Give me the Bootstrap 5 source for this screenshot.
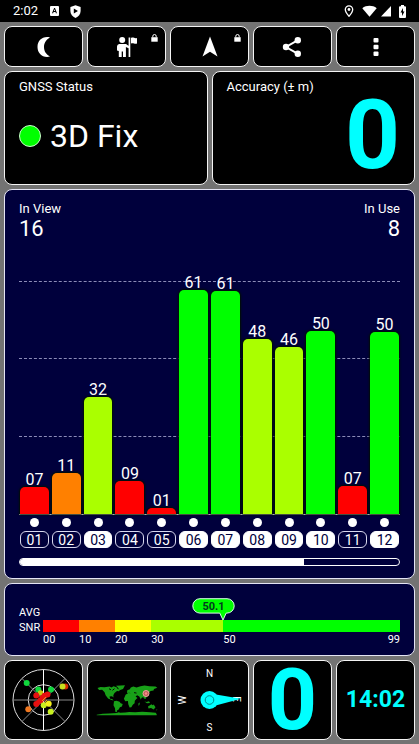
<!DOCTYPE html>
<html lang="en">
<head>
<meta charset="utf-8">
<meta name="viewport" content="width=device-width, initial-scale=1">
<title>GNSS Status</title>
<link href="https://cdn.jsdelivr.net/npm/bootstrap@5.3.0/dist/css/bootstrap.min.css" rel="stylesheet">
<style>
body{background:#737373;color:#fff;font-family:Roboto,"Liberation Sans",sans-serif;font-size:13px;line-height:16px}
svg{display:block}
.statusbar{height:22px;padding:0 13px;font-size:13px}
.icons{gap:11px;margin-left:12px}
.deck{padding:4px;gap:4px}
.rowline{gap:4px}
.rowline>*{flex:1 1 0;min-width:0}
.tile{background:#000;border:1px solid #f4f4f4;border-radius:8px;color:#fff;padding:0}
.tool{height:41px}
.lock{position:absolute;top:7px;right:7px}
.info{height:114px;padding:7px 14px}
.lamp{width:22px;height:22px;border-radius:50%;background:#0f0;border:1px solid #c8ffc8}
.fixrow{margin-top:21px}
.fix{font-size:32px;line-height:40px;margin-left:9px}
.cyan{color:#0ff;font-weight:700}
.acc{font-size:96px;line-height:80px}
.navy{background:#00003c;border:1px solid #e4e4f4;border-radius:8px;padding:11px 14px 12px}
.big{font-size:22px;line-height:24px}
.plot{height:274px;border-bottom:1px solid #fff;position:relative;padding:0 1px}
.guides{position:absolute;inset:0}
.guides i{display:block;height:78px;border-top:1px dashed #8c8cb8}
.guides i:first-child{height:77px}
.bars{gap:3px;position:relative}
.bars>*{flex:1 1 0;min-width:0}
.val{font-size:16px;line-height:14px}
.bar{width:100%;flex-shrink:0;border-radius:5px 5px 0 0;box-shadow:0 0 2px 1px #001000}
.c-red{background:#f00}.c-org{background:#ff8000}.c-yel{background:#ff0}.c-lime{background:#af0}.c-grn{background:#0f0}
.ids{padding:3px 1px 0}
.pip{width:9px;height:9px;border-radius:50%;background:#fff;margin-bottom:4px}
.chip{width:100%;height:17px;border:1px solid #d8d8ee;border-radius:6px;font-size:14px;line-height:16px;text-align:center}
.used{background:#fff;color:#00003c;border-color:#fff}
.track{height:8px;margin-top:10px;border:1px solid #fff;border-radius:4px;background:transparent}
.track .progress-bar{background:#fff}
.avgbox{height:73px;padding:21px 14px 0}
.avgname{font-size:11px;line-height:15px;width:24px}
.scale{height:12px;margin-top:15px}
.f10{flex:10 1 0;min-width:0}.f20{flex:20 1 0;min-width:0}.f49{flex:49 1 0;min-width:0}
.ticks{font-size:11px;line-height:15px}
.bubble{position:absolute;top:-7px;left:calc(50.5% - 31px)}
.gauge{height:80px}
.gauge svg{width:100%;height:100%}
.speed{font-size:86px;line-height:78px}
.clock{font-size:23px;line-height:26px}
</style>
<script src="https://cdn.jsdelivr.net/npm/bootstrap@5.3.0/dist/js/bootstrap.bundle.min.js"></script>
</head>
<body>
<header class="statusbar bg-black d-flex align-items-center justify-content-between">
  <div class="d-flex align-items-center">
    <span>2:02</span>
    <div class="icons d-flex align-items-center">
    <svg width="9" height="10" viewBox="0 0 9 10"><rect width="9" height="10" rx="1" fill="#fff"/><path d="M2 7.200 4.100 2h.9L7 7.200H5.900L5.500 6H3.600L3.100 7.200zM3.900 5h1.300L4.550 3.300zM1.500 8.500h6" fill="#000"/></svg>
    <svg width="11" height="13" viewBox="2.500 .3 11 13.200"><path d="M8 .5 13.200 2.300v4.200c0 3.300-2.200 5.700-5.200 6.900-3-1.200-5.200-3.600-5.200-6.900V2.300z" fill="#fff"/><path d="M6.300 3.900v5l4.200-2.500z" fill="#000"/></svg>
    </div>
  </div>
  <div class="d-flex align-items-center">
    <svg width="10" height="12" viewBox="0 0 10 12"><path d="M5 .8a3.700 3.700 0 0 0-3.700 3.700C1.300 7.100 5 11.200 5 11.200s3.700-4.100 3.700-6.700A3.700 3.700 0 0 0 5 .8z" fill="none" stroke="#fff" stroke-width="1.300"/><circle cx="5" cy="4.500" r="1.400" fill="#fff"/></svg>
    <svg class="ms-2" width="15" height="12" viewBox="0 0 15 12"><path d="M.3 3.200C4.300 0 10.700 0 14.700 3.200L7.500 11.800z" fill="#fff"/></svg>
    <svg class="ms-1" width="10" height="12" viewBox="0 0 10 12"><path d="M0 11.500 10 1v10.500z" fill="#fff"/></svg>
    <svg class="ms-2" width="7" height="13" viewBox="0 0 7 13"><path d="M0 2.200q0-1 1-1h1V0h3v1.200h1q1 0 1 1V12q0 1-1 1H1q-1 0-1-1z" fill="#fff"/><path d="M4 3 1.500 7.500H3V11l2.500-4.500H4z" fill="#000"/></svg>
  </div>
</header>

<main class="deck d-flex flex-column">
  <nav class="rowline d-flex" aria-label="Tools">
    <button class="tile tool btn d-flex align-items-center justify-content-center" aria-label="Night mode"><svg width="22" height="22" viewBox="0 0 22 22"><path d="M17 1.400C9.500-.2 4.500 4.500 4.500 11S9.500 22.200 17 20.600C12.500 18 11 14.500 11 11s1.500-7 6-9.600z" fill="#fff"/></svg></button>
    <button class="tile tool btn position-relative d-flex align-items-center justify-content-center" aria-label="Guide"><svg width="22" height="22" viewBox="0 0 22 22"><g fill="#fff"><circle cx="6.200" cy="4" r="3"/><path d="M3 8h7l3.500 2.500-1 1.700L9.900 11v10H7v-5.500H5.700V21H2.800v-6L1 14.500v-4Q1 8.500 3 8zM12.600 1.500h1.700V21h-1.700zM15 2c2.300-1.300 3.500 1 6 0v5.500c-2.500 1-3.700-1.200-6 0z"/></g></svg>
      <svg class="lock" width="7" height="8" viewBox="0 0 7 8"><path d="M.3 3.200h6.400v4.500H.3z" fill="#fff"/><path d="M1.800 3.300V2.200a1.700 1.700 0 0 1 3.400 0v1.100" fill="none" stroke="#fff"/></svg></button>
    <button class="tile tool btn position-relative d-flex align-items-center justify-content-center" aria-label="Navigate"><svg width="22" height="22" viewBox="0 0 22 22"><path d="m11 .5 7.500 20-7.500-4.700-7.500 4.700z" fill="#fff"/></svg>
      <svg class="lock" width="7" height="8" viewBox="0 0 7 8"><path d="M.3 3.200h6.400v4.500H.3z" fill="#fff"/><path d="M1.800 3.300V2.200a1.700 1.700 0 0 1 3.400 0v1.100" fill="none" stroke="#fff"/></svg></button>
    <button class="tile tool btn d-flex align-items-center justify-content-center" aria-label="Share"><svg width="22" height="22" viewBox="0 0 22 22"><path d="M15.500 4.300 4 11l11.500 6.700" fill="none" stroke="#fff" stroke-width="2"/><g fill="#fff"><circle cx="15.800" cy="4.300" r="3.200"/><circle cx="4" cy="11" r="3.200"/><circle cx="15.800" cy="17.700" r="3.200"/></g></svg></button>
    <button class="tile tool btn d-flex align-items-center justify-content-center" aria-label="Menu"><svg width="6" height="20" viewBox="0 0 6 20"><g fill="#fff"><rect x=".5" y="1" width="5" height="4.500" rx="1"/><rect x=".5" y="7.800" width="5" height="4.500" rx="1"/><rect x=".5" y="14.600" width="5" height="4.500" rx="1"/></g></svg></button>
  </nav>

  <section class="rowline d-flex">
    <div class="tile info">
      <div>GNSS Status</div>
      <div class="fixrow d-flex align-items-center"><span class="lamp"></span><span class="fix">3D Fix</span></div>
    </div>
    <div class="tile info">
      <div>Accuracy (± m)</div>
      <div class="acc cyan text-end">0</div>
    </div>
  </section>

  <section class="navy">
    <div class="d-flex justify-content-between">
      <div>In View<div class="big">16</div></div>
      <div class="text-end">In Use<div class="big">8</div></div>
    </div>
    <div class="plot">
      <div class="guides d-flex flex-column justify-content-end"><i></i><i></i><i></i></div>
      <div class="bars d-flex h-100">
        <div class="d-flex flex-column justify-content-end align-items-center"><span class="val">07</span><div class="bar c-red" style="height:9.9%"></div></div>
        <div class="d-flex flex-column justify-content-end align-items-center"><span class="val">11</span><div class="bar c-org" style="height:15%"></div></div>
        <div class="d-flex flex-column justify-content-end align-items-center"><span class="val">32</span><div class="bar c-lime" style="height:42.9%"></div></div>
        <div class="d-flex flex-column justify-content-end align-items-center"><span class="val">09</span><div class="bar c-red" style="height:12.1%"></div></div>
        <div class="d-flex flex-column justify-content-end align-items-center"><span class="val">01</span><div class="bar c-red" style="height:2.2%"></div></div>
        <div class="d-flex flex-column justify-content-end align-items-center"><span class="val">61</span><div class="bar c-grn" style="height:82%"></div></div>
        <div class="d-flex flex-column justify-content-end align-items-center"><span class="val">61</span><div class="bar c-grn" style="height:81.7%"></div></div>
        <div class="d-flex flex-column justify-content-end align-items-center"><span class="val">48</span><div class="bar c-lime" style="height:64.200%"></div></div>
        <div class="d-flex flex-column justify-content-end align-items-center"><span class="val">46</span><div class="bar c-lime" style="height:61.200%"></div></div>
        <div class="d-flex flex-column justify-content-end align-items-center"><span class="val">50</span><div class="bar c-grn" style="height:67%"></div></div>
        <div class="d-flex flex-column justify-content-end align-items-center"><span class="val">07</span><div class="bar c-red" style="height:10.300%"></div></div>
        <div class="d-flex flex-column justify-content-end align-items-center"><span class="val">50</span><div class="bar c-grn" style="height:66.700%"></div></div>
      </div>
    </div>
    <div class="bars ids d-flex">
      <div class="d-flex flex-column align-items-center"><span class="pip"></span><span class="chip">01</span></div>
      <div class="d-flex flex-column align-items-center"><span class="pip"></span><span class="chip">02</span></div>
      <div class="d-flex flex-column align-items-center"><span class="pip"></span><span class="chip used">03</span></div>
      <div class="d-flex flex-column align-items-center"><span class="pip"></span><span class="chip">04</span></div>
      <div class="d-flex flex-column align-items-center"><span class="pip"></span><span class="chip">05</span></div>
      <div class="d-flex flex-column align-items-center"><span class="pip"></span><span class="chip used">06</span></div>
      <div class="d-flex flex-column align-items-center"><span class="pip"></span><span class="chip used">07</span></div>
      <div class="d-flex flex-column align-items-center"><span class="pip"></span><span class="chip used">08</span></div>
      <div class="d-flex flex-column align-items-center"><span class="pip"></span><span class="chip used">09</span></div>
      <div class="d-flex flex-column align-items-center"><span class="pip"></span><span class="chip used">10</span></div>
      <div class="d-flex flex-column align-items-center"><span class="pip"></span><span class="chip">11</span></div>
      <div class="d-flex flex-column align-items-center"><span class="pip"></span><span class="chip used">12</span></div>
    </div>
    <div class="progress track"><div class="progress-bar" style="width:75%"></div></div>
  </section>

  <section class="navy avgbox d-flex">
    <div class="avgname">AVG<br>SNR</div>
    <div class="flex-grow-1 position-relative">
      <div class="scale d-flex"><div class="f10 c-red"></div><div class="f10 c-org"></div><div class="f10 c-yel"></div><div class="f20 c-lime"></div><div class="f49 c-grn"></div></div>
      <div class="ticks d-flex"><span class="f10">00</span><span class="f10">10</span><span class="f10">20</span><span class="f20">30</span><span class="f49 d-flex justify-content-between"><span>50</span><span>99</span></span></div>
      <svg class="bubble" width="44" height="23" viewBox="0 0 44 23" role="img" aria-label="Average 50.1"><path d="M8 .7h27a7.200 7.200 0 0 1 0 14.400h-.8L31 22l-3.200-6.900H8A7.200 7.200 0 0 1 8 .7z" fill="#0f0" stroke="#d8ffe4"/><text x="21.500" y="12" text-anchor="middle" font-size="11" font-weight="700" fill="#003c1e">50.1</text></svg>
    </div>
  </section>

  <section class="rowline d-flex">
    <div class="tile gauge"><svg viewBox="1 1 77 78" role="img" aria-label="Sky view">
      <g fill="none" stroke="#ddd" stroke-width="1"><circle cx="39.500" cy="40" r="30.500"/><circle cx="39.500" cy="40" r="15.300"/><path d="M39.500 9.500v61" stroke="#fff"/><path d="M9 40h61M18 18.500l43 43M61 18.500l-43 43" stroke="#888"/></g>
      <g fill="#0fd83c"><circle cx="22.700" cy="23" r="3"/><circle cx="34.300" cy="29.500" r="3"/><circle cx="47" cy="29.500" r="3"/></g>
      <circle cx="61.300" cy="26.500" r="3" fill="#d42b00"/><circle cx="58.500" cy="26.500" r="3" fill="#c8e020"/>
      <circle cx="36.500" cy="33" r="2.800" fill="#c8c810"/><circle cx="24.300" cy="49.300" r="3" fill="#f07820"/>
      <g fill="#e81010"><circle cx="32.300" cy="35.500" r="3"/><circle cx="43.500" cy="34.500" r="3"/><circle cx="40.500" cy="35.700" r="3"/><circle cx="38.500" cy="38" r="3"/><circle cx="36.500" cy="40.500" r="3"/><circle cx="32.300" cy="44" r="3"/><circle cx="34.500" cy="42" r="2.500"/></g>
      <path d="m38 41 4-4M40 43l3-3" stroke="#e0a020" stroke-width="1"/>
      <g fill="#c8f020"><circle cx="39.700" cy="45.300" r="3"/><circle cx="46.700" cy="51.700" r="3"/></g><circle cx="44.700" cy="43.700" r="3" fill="#f4f01c"/>
    </svg></div>
    <div class="tile gauge"><svg viewBox="1 1 77 78" role="img" aria-label="World map">
      <g transform="translate(0 4.600) scale(1 .83)"><g fill="#18a018"><path d="M10.500 28.200l3-1.200 4 .3 5-.8 2 1.200 2-1.500 3 1 1 2 2.500 1-1 2-2-.5-2.500 2.500-1.200 2.800.2 2.500-1.500-1.500-2.500.5.600 2.500 2 .3 1.500 2-2-.6-3.500-1.800-2.500-4-1-3.500-2.500-3-3 .3z"/><path d="M27 44.300l2.500-.8 3 1.200 1.200 2 2 .8-.8 3-2 1-1.200 2.500-1.500 1-.5 2.500-1.400-.8-.3-4.200-1.500-3.500z"/><path d="M29 25.600l9-.6-2 4.300-3.500 1.700-1.500-3z"/><path d="M38.600 36.300l2.700-2 3.200.2 2.700.9.800 2.400 2.500 2.400-1.200 1.300-1.500 2-.2 3-1.800 1.800-1.500 3-1.700.5-1.300-4-.4-3.800-2.700.2-1.300-3z"/><path d="M40 33.500l.3-2.500 2.500-1.200 1-2.300 2.500-1.200 3.200 1.200 4-1.500 4-.8 5 1 6 .3 1.800 1.300-3.300 1.500-.5 2-3 .5-1.500 2.500-.5 3-2 1.600-1 2.500-1.500-.5-.8-2-1.700 1.200-.7 2-1.500-3.600-2.200-1.500-2 2-1.500-2.500-2.700-1-1.500-1.500-2 .3z"/><path d="M57.500 44.500l2 .7 2.500-1 1 2-3 .5zM61 50.500l2.300-1.800 1.200-.8 1 1 1.200-.8 1.800 3.400-1.800 2.500-2.700-1.700-2.500.7zM51.500 46.500l1.300-.8-.4 3-1 .8zM69.500 54l1-.5-1.500 2.500z"/><path d="M9.700 60.300l6-1 6-.4 8-.5 2-1 1.500.5 5-.1 4-.7 6 .2 7-.6 8 .6 5.500.6 1 2V61h-60z"/></g>
      <path d="M22 29l2 1.500M27.500 29l-2 2M47 33.800l2.500.5" stroke="#000"/></g>
      <circle cx="59" cy="33.500" r="3" fill="#b86058" stroke="#f0a0a0" stroke-width="1"/><circle cx="59" cy="33.500" r="1.300" fill="#f88"/>
    </svg></div>
    <div class="tile gauge"><svg viewBox="1 1 77 78" role="img" aria-label="Compass"><g fill="#fff" font-size="10" text-anchor="middle"><text x="39.500" y="16.500">N</text><text x="39.500" y="70.500">S</text><text transform="translate(16 40) rotate(-90)">W</text><text transform="translate(63 39) rotate(90)">E</text></g><path d="M40 33.500l31 5.200L41 46.800z" fill="#0ff"/><circle cx="39.500" cy="40" r="9" fill="#0ff"/><circle cx="39.500" cy="40" r="4.300" fill="none" stroke="#088"/></svg></div>
    <div class="tile gauge speed cyan text-center">0</div>
    <div class="tile gauge clock cyan d-flex align-items-center justify-content-center">14:02</div>
  </section>
</main>
</body>
</html>
